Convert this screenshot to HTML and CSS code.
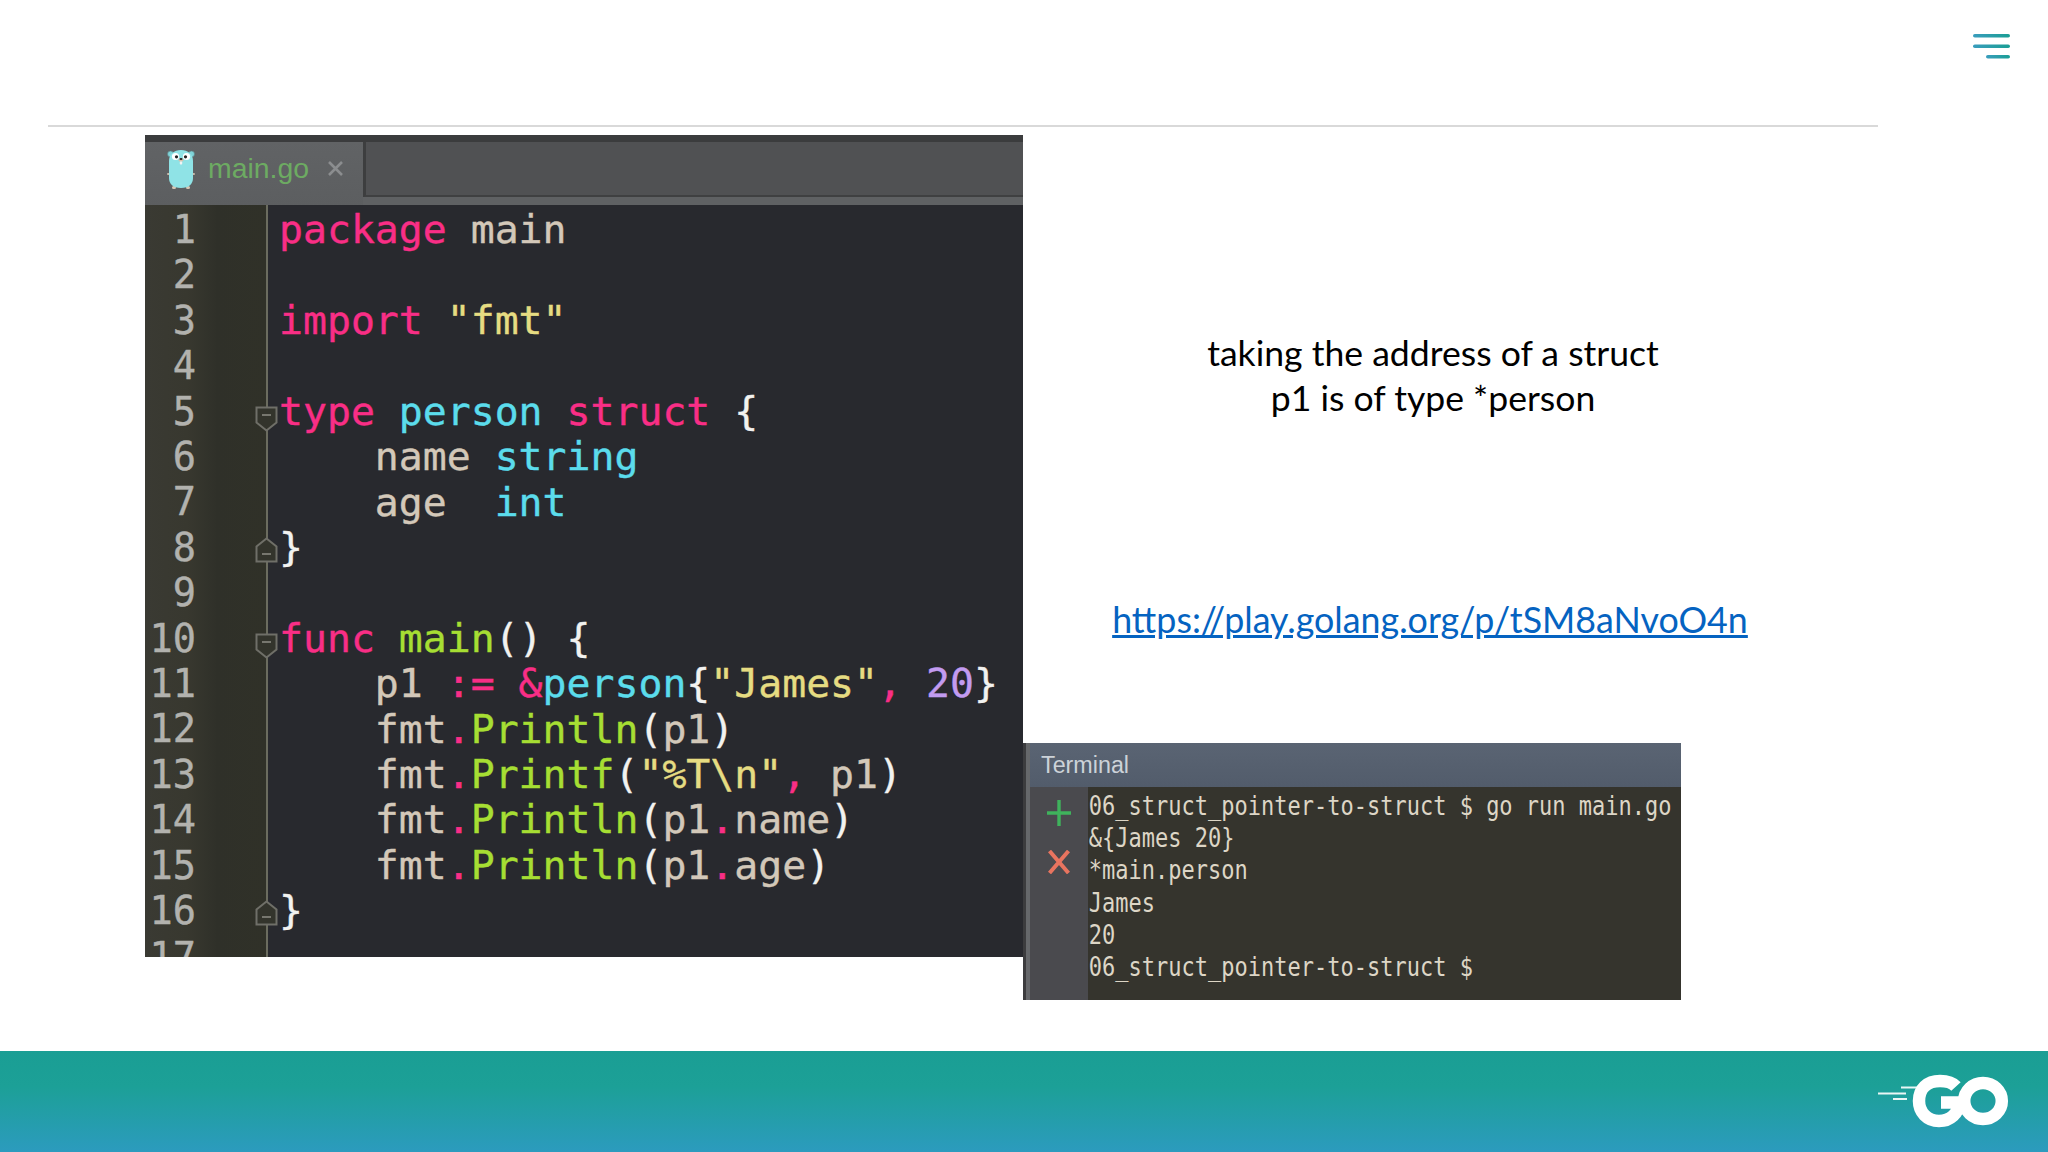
FILE: index.html
```html
<!DOCTYPE html>
<html lang="en">
<head>
<meta charset="utf-8">
<title>taking the address of a struct</title>
<link rel="stylesheet" href="styles.css">
</head>
<body>
<div class="slide">
  <header class="top">
    <div class="rule"></div>
    <svg class="menu" width="37" height="25" viewBox="0 0 37 25" aria-label="menu">
      <defs><linearGradient id="mg" x1="0" x2="1" y1="0" y2="0"><stop offset="0" stop-color="#3a9dbd"/><stop offset="1" stop-color="#1a9e94"/></linearGradient></defs>
      <rect x="0" y="0" width="37" height="3.6" rx="1.8" fill="url(#mg)"/>
      <rect x="0" y="10.5" width="37" height="3.6" rx="1.8" fill="url(#mg)"/>
      <rect x="13" y="21" width="24" height="3.6" rx="1.8" fill="url(#mg)"/>
    </svg>
  </header>

  <main class="content">
    <section class="editor">
      <div class="tabbar">
        <div class="tab">
          <svg class="gopher" width="28" height="40" viewBox="0 0 28 40">
            <circle cx="3.500" cy="5" r="3" fill="#7fd3d8" stroke="#5d7c80" stroke-width=".6"/>
            <circle cx="24.500" cy="5" r="3" fill="#7fd3d8" stroke="#5d7c80" stroke-width=".6"/>
            <rect x="0" y="24" width="3" height="2" rx="1" fill="#c9b9a8"/>
            <rect x="25" y="24" width="3" height="2" rx="1" fill="#c9b9a8"/>
            <rect x="5" y="37" width="4" height="3" rx="1.5" fill="#d8c8b4"/>
            <rect x="19" y="37" width="4" height="3" rx="1.5" fill="#d8c8b4"/>
            <path d="M2 12C2 5 7 1 14 1s12 4 12 11v17c0 6-4 10-12 10S2 35 2 29z" fill="#8fe3e6"/>
            <circle cx="8.500" cy="7.500" r="3.600" fill="#fff"/>
            <circle cx="19.500" cy="7.500" r="3.600" fill="#fff"/>
            <circle cx="9.500" cy="7.800" r="1.600" fill="#222"/>
            <circle cx="18.500" cy="7.800" r="1.600" fill="#222"/>
            <ellipse cx="14" cy="11" rx="2.600" ry="1.800" fill="#d9c2ae"/>
            <ellipse cx="14" cy="10" rx="1.500" ry="1" fill="#222"/>
            <rect x="12.800" y="12.400" width="2.400" height="3" rx=".6" fill="#f3f3f3"/>
          </svg>
          <span class="tabname">main.go</span>
          <svg class="tabclose" width="15" height="15" viewBox="0 0 15 15"><path d="M1 1l13 13M14 1L1 14" stroke="#8b8d8f" stroke-width="2.6"/></svg>
        </div>
        <div class="tabrest"></div>
      </div>
      <div class="codepane">
        <div class="gutter">
          <div class="num">1</div>
          <div class="num">2</div>
          <div class="num">3</div>
          <div class="num">4</div>
          <div class="num">5<svg class="fold" width="23" height="26" viewBox="0 0 23 26"><path d="M1.500 1.500h20v15l-10 8-10-8z" fill="#33342c" stroke="#6f6f68" stroke-width="2"/><path d="M7 9h9" stroke="#77776f" stroke-width="2"/></svg></div>
          <div class="num">6</div>
          <div class="num">7</div>
          <div class="num">8<svg class="fold foldup" width="23" height="26" viewBox="0 0 23 26"><path d="M1.500 24.500h20v-15l-10-8-10 8z" fill="#33342c" stroke="#6f6f68" stroke-width="2"/><path d="M7 17h9" stroke="#77776f" stroke-width="2"/></svg></div>
          <div class="num">9</div>
          <div class="num">10<svg class="fold" width="23" height="26" viewBox="0 0 23 26"><path d="M1.500 1.500h20v15l-10 8-10-8z" fill="#33342c" stroke="#6f6f68" stroke-width="2"/><path d="M7 9h9" stroke="#77776f" stroke-width="2"/></svg></div>
          <div class="num">11</div>
          <div class="num">12</div>
          <div class="num">13</div>
          <div class="num">14</div>
          <div class="num">15</div>
          <div class="num">16<svg class="fold foldup" width="23" height="26" viewBox="0 0 23 26"><path d="M1.500 24.500h20v-15l-10-8-10 8z" fill="#33342c" stroke="#6f6f68" stroke-width="2"/><path d="M7 17h9" stroke="#77776f" stroke-width="2"/></svg></div>
          <div class="num">17</div>
        </div>
<pre class="code"><span class="k">package</span> main

<span class="k">import</span> <span class="s">"fmt"</span>

<span class="k">type</span> <span class="t">person</span> <span class="k">struct</span> <span class="w">{</span>
    name <span class="t">string</span>
    age  <span class="t">int</span>
<span class="w">}</span>

<span class="k">func</span> <span class="f">main</span><span class="w">()</span> <span class="w">{</span>
    p1 <span class="k">:=</span> <span class="k">&amp;</span><span class="t">person</span><span class="w">{</span><span class="s">"James"</span><span class="k">,</span> <span class="n">20</span><span class="w">}</span>
    fmt<span class="k">.</span><span class="f">Println</span><span class="w">(</span>p1<span class="w">)</span>
    fmt<span class="k">.</span><span class="f">Printf</span><span class="w">(</span><span class="s">"%T\n"</span><span class="k">,</span> p1<span class="w">)</span>
    fmt<span class="k">.</span><span class="f">Println</span><span class="w">(</span>p1<span class="k">.</span>name<span class="w">)</span>
    fmt<span class="k">.</span><span class="f">Println</span><span class="w">(</span>p1<span class="k">.</span>age<span class="w">)</span>
<span class="w">}</span></pre>
      </div>
    </section>

    <section class="side">
      <div class="notes">
        <p class="note">taking the address of a struct<br>p1 is of type *person</p>
        <a class="link" href="https://play.golang.org/p/tSM8aNvoO4n">https://play.golang.org/p/tSM8aNvoO4n</a>
      </div>
      <div class="terminal">
        <div class="termtitle">Terminal</div>
        <div class="termbody">
          <div class="termtools">
            <svg class="plus" width="24" height="26" viewBox="0 0 24 26"><path d="M12 0v26M0 13h24" stroke="#3fb35c" stroke-width="3.4"/></svg>
            <svg class="cross" width="22" height="24" viewBox="0 0 22 24"><path d="M1.500 1l19 22M20.500 1l-19 22" stroke="#e8745f" stroke-width="4"/></svg>
          </div>
<pre class="termtext">06_struct_pointer-to-struct $ go run main.go
&amp;{James 20}
*main.person
James
20
06_struct_pointer-to-struct $</pre>
        </div>
      </div>
    </section>
  </main>

  <footer class="bottom">
    <svg class="gologo" width="132" height="56" viewBox="0 0 132 56" aria-label="Go">
      <path d="M24 14.500h25M1 20.500h28M16 26h14" stroke="#fff" stroke-width="2" fill="none" stroke-opacity=".9"/>
      <path d="M79 13.500C75 9 69 8 63 8 50 8 42 16 42 28c0 11 8 20 20 20 12 0 19-8 21-18.500H64" fill="none" stroke="#fff" stroke-width="12.500"/>
      <ellipse cx="106" cy="28" rx="18.800" ry="18" fill="none" stroke="#fff" stroke-width="12.500"/>
    </svg>
  </footer>
</div>
</body>
</html>
```
FILE: styles.css
```css
html, body {
  margin: 0;
  padding: 0;
  background: #fff;
  overflow: hidden;
}

.slide {
  width: 2048px;
  height: 1152px;
  display: flex;
  flex-direction: column;
  background: #fff;
}

/* header */
.top {
  height: 127px;
  flex: none;
  box-sizing: border-box;
  padding: 34px 38px 0 48px;
  display: flex;
  justify-content: space-between;
}
.rule {
  width: 1830px;
  height: 2px;
  background: #d9d9d9;
  align-self: flex-end;
}
.menu {
  display: block;
  flex: none;
}

/* content */
.content {
  flex: 1;
  min-height: 0;
  display: flex;
  padding-left: 145px;
}

/* editor */
.editor {
  width: 878px;
  height: 822px;
  margin-top: 8px;
  flex: none;
  display: flex;
  flex-direction: column;
  overflow: hidden;
  background: #28292e;
}
.tabbar {
  height: 70px;
  flex: none;
  box-sizing: border-box;
  border-top: 7px solid #3b3c3d;
  display: flex;
  background: #5f6163;
}
.tab {
  width: 218px;
  flex: none;
  box-sizing: border-box;
  padding: 0 20px 10px 22px;
  display: flex;
  align-items: center;
  background: linear-gradient(180deg, #616365, #5c5e60);
}
.gopher { flex: none; }
.tabname {
  margin-left: 13px;
  font: 28.4px "Liberation Sans", Arial, sans-serif;
  color: #6dab62;
}
.tabclose {
  margin-left: 19px;
  flex: none;
}
.tabrest {
  flex: 1;
  height: 55px;
  box-sizing: border-box;
  border-left: 3px solid #3d3e3f;
  border-bottom: 2px solid #3f4041;
  background: #505153;
}

.codepane {
  flex: 1;
  min-height: 0;
  display: flex;
  font-family: "DejaVu Sans Mono", monospace;
  font-size: 39.8px;
  line-height: 45.42px;
  -webkit-text-stroke: 0.4px;
}
.gutter {
  width: 121px;
  flex: none;
  padding-top: 2px;
  border-right: 2px solid #6b6c5f;
  background: linear-gradient(90deg, #3a3a33 0, #38382f 35%, #2f3029 60%, #303128 100%);
}
.num {
  height: 45.42px;
  box-sizing: border-box;
  width: 121px;
  padding-right: 70px;
  text-align: right;
  color: #b2b2ae;
  font-size: 38.6px;
  position: relative;
}
.fold {
  position: absolute;
  right: -12px;
  top: 17px;
}
.foldup {
  top: 12px;
}
.code {
  margin: 0;
  padding: 2px 0 0 11px;
  font: inherit;
  color: #d3c8b9;
  white-space: pre;
}
.k { color: #f92e86; }
.s { color: #e6dc82; }
.t { color: #5bdcec; }
.f { color: #a6de33; }
.n { color: #c29bf0; }
.w { color: #f2f2f0; }

/* right column */
.side {
  flex: 1;
  min-width: 0;
  display: flex;
  flex-direction: column;
  justify-content: space-between;
  padding-bottom: 51px;
}
.notes {
  width: 820px;
  padding-top: 204px;
  text-align: center;
  font-family: Lato, "Open Sans", sans-serif;
  color: #000;
}
.note {
  margin: 0;
  font-size: 35.6px;
  line-height: 44.5px;
}
.link {
  display: block;
  margin: 177px 6px 0 0;
  font-size: 35.8px;
  line-height: 45px;
  color: #0563c1;
  text-decoration: underline;
}

/* terminal */
.terminal {
  width: 658px;
  height: 257px;
  flex: none;
  box-sizing: border-box;
  border-left: 3px solid #3c3c3e;
  display: flex;
  flex-direction: column;
  background: #66686b;
}
.termtitle {
  height: 44px;
  flex: none;
  box-sizing: border-box;
  margin-left: 4px;
  padding-left: 11px;
  font: 23.3px/44px "Liberation Sans", Arial, sans-serif;
  color: #ccd2d8;
  background: linear-gradient(180deg, #5a6473, #525c6b);
}
.termbody {
  flex: 1;
  min-height: 0;
  margin-left: 4px;
  display: flex;
  background: #35342d;
}
.termtools {
  width: 58px;
  flex: none;
  box-sizing: border-box;
  padding: 13px 0 0 17px;
  display: flex;
  flex-direction: column;
  gap: 24px;
  background: #4a4a4e;
}
.termtools svg { display: block; }
.cross { margin-left: 1px; }
.termtext {
  margin: 0;
  padding: 3px 0 0 1px;
  font: 26px/32.2px "DejaVu Sans Mono", monospace;
  color: #ddd6c6;
  white-space: pre;
  transform: scaleX(0.846);
  transform-origin: left top;
}

/* footer */
.bottom {
  height: 101px;
  flex: none;
  box-sizing: border-box;
  padding: 22px 39px 0 0;
  display: flex;
  justify-content: flex-end;
  align-items: flex-start;
  background: linear-gradient(180deg, #1a9e94 0, #1ca097 35%, #2c9bbe 100%);
}
.gologo { display: block; }
```
